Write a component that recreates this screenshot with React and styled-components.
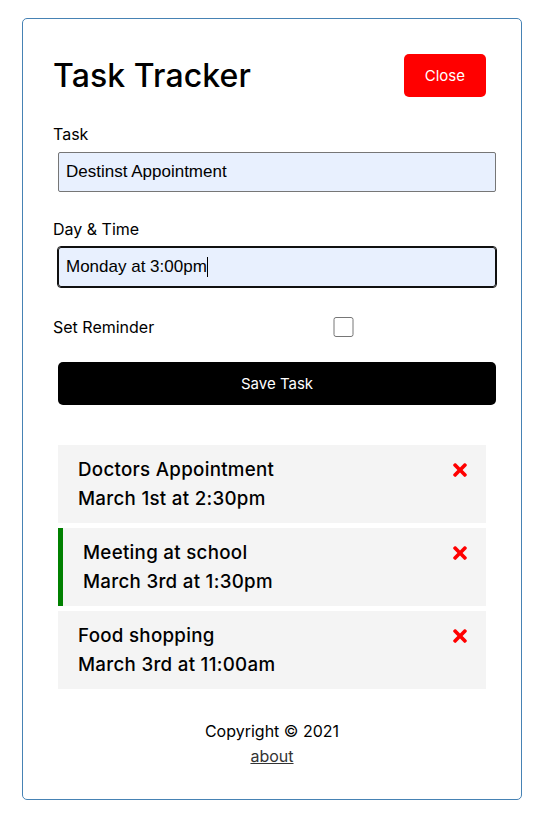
import styled, { createGlobalStyle } from "styled-components";
import { FaTimes } from "react-icons/fa";

const GlobalStyle = createGlobalStyle`
  * {
    box-sizing: border-box;
    margin: 0;
    padding: 0;
  }

  body {
    font-family: "Inter", "Open Sans", sans-serif;
    line-height: 1.5;
    color: #000;
    background: #fff;
  }
`;

const tasks = [
  { id: 1, text: "Doctors Appointment", day: "March 1st at 2:30pm", reminder: false },
  { id: 2, text: "Meeting at school", day: "March 3rd at 1:30pm", reminder: true },
  { id: 3, text: "Food shopping", day: "March 3rd at 11:00am", reminder: false },
];

export default function App() {
  return (
    <>
      <GlobalStyle />
      <Container>
        <Header>
          <Title>Task Tracker</Title>
          <Button color="#ff0000">Close</Button>
        </Header>

        <AddForm onSubmit={(e) => e.preventDefault()}>
          <FormControl>
            <label>Task</label>
            <TextInput type="text" defaultValue="Destinst Appointment" />
          </FormControl>
          <FormControl>
            <label>Day &amp; Time</label>
            <InputWrap>
              <TextInput type="text" defaultValue="Monday at 3:00pm" $focused />
              <Caret />
            </InputWrap>
          </FormControl>
          <CheckControl>
            <label>Set Reminder</label>
            <input type="checkbox" />
          </CheckControl>
          <Button color="#000" $block>
            Save Task
          </Button>
        </AddForm>

        <div>
          {tasks.map((task) => (
            <Task key={task.id} $reminder={task.reminder}>
              <TaskTitle>
                {task.text}
                <FaTimes color="red" size={20} />
              </TaskTitle>
              <TaskDay>{task.day}</TaskDay>
            </Task>
          ))}
        </div>

        <Footer>
          <p>Copyright &copy; 2021</p>
          <a href="#about">about</a>
        </Footer>
      </Container>
    </>
  );
}

const Container = styled.div`
  width: 500px;
  margin: 18px 0 0 22px;
  overflow: auto;
  min-height: 300px;
  border: 1px solid steelblue;
  padding: 30px;
  border-radius: 5px;
`;

const Header = styled.header`
  display: flex;
  justify-content: space-between;
  align-items: center;
  margin-bottom: 20px;
`;

const Title = styled.h1`
  font-size: 32px;
  font-weight: 500;
  letter-spacing: 0.1px;
`;

const Button = styled.button`
  display: ${(p) => (p.$block ? "block" : "inline-block")};
  width: ${(p) => (p.$block ? "100%" : "auto")};
  background: ${(p) => p.color};
  color: #fff;
  border: none;
  padding: 10px 21px;
  margin: 5px;
  border-radius: 5px;
  cursor: pointer;
  text-decoration: none;
  font-size: 15px;
  line-height: 23px;
  font-family: inherit;
`;

const AddForm = styled.form`
  margin-bottom: 40px;
`;

const FormControl = styled.div`
  margin: 20px 0;

  label {
    display: block;
    font-size: 16px;
    line-height: 25px;
  }
`;

const InputWrap = styled.div`
  position: relative;
`;

const TextInput = styled.input`
  width: 100%;
  height: 40px;
  margin: 5px;
  padding: 3px 7px;
  font-size: 17px;
  font-family: "Liberation Sans", Arial, sans-serif;
  color: #000;
  background: #e8f0fe;
  border: 1px solid ${(p) => (p.$focused ? "#101010" : "#767676")};
  border-radius: ${(p) => (p.$focused ? "3px" : "2px")};
  outline: ${(p) => (p.$focused ? "1px solid #101010" : "none")};
`;

const Caret = styled.span`
  position: absolute;
  left: 154px;
  top: 15px;
  width: 1px;
  height: 20px;
  background: #000;
`;

const CheckControl = styled.div`
  margin: 20px 0;
  display: flex;
  align-items: center;
  justify-content: space-between;

  label {
    flex: 1;
    font-size: 16px;
    line-height: 25px;
  }

  input {
    flex: 2;
    height: 20px;
    margin: 5px;
  }
`;

const Task = styled.div`
  background: #f4f4f4;
  margin: 5px;
  padding: 10px 20px;
  cursor: pointer;
  border-left: ${(p) => (p.$reminder ? "5px solid green" : "none")};
`;

const TaskTitle = styled.h3`
  display: flex;
  align-items: center;
  justify-content: space-between;
  font-size: 18.72px;
  font-weight: 500;
  letter-spacing: 0.3px;
  line-height: 29px;

  svg {
    margin-right: -4px;
  }
`;

const TaskDay = styled.p`
  font-size: 18.72px;
  font-weight: 500;
  letter-spacing: 0.3px;
  line-height: 29px;
`;

const Footer = styled.footer`
  margin-top: 30px;
  text-align: center;
  font-size: 16px;
  line-height: 25px;

  a {
    color: #333;
  }
`;
